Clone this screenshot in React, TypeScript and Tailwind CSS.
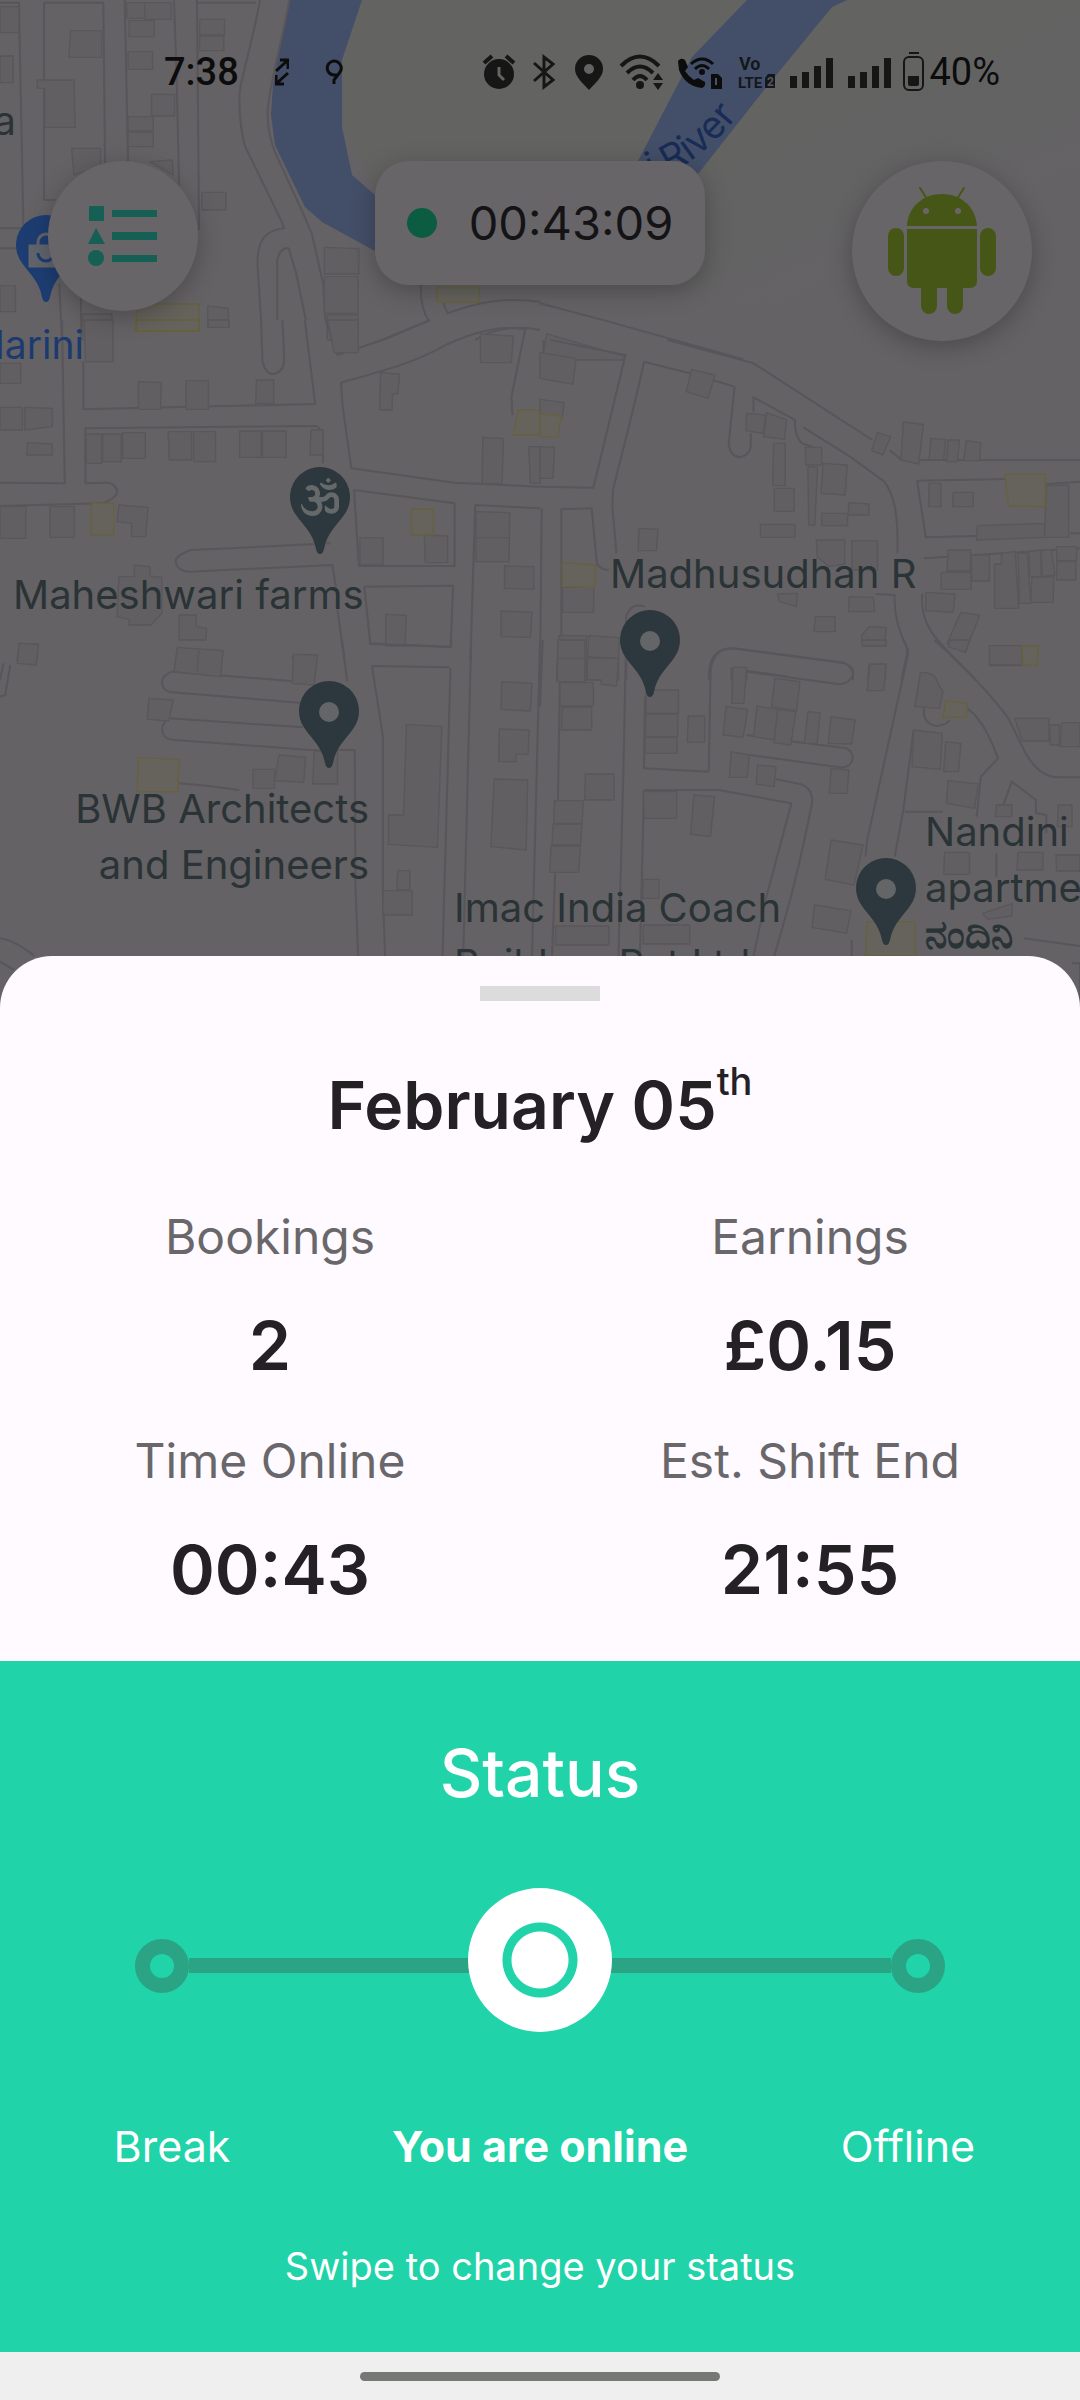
import { useState } from "react";
// icons
import { FaOm } from "react-icons/fa";

interface ITile {
  transform: string;
  roads: string;
  blocks: string;
  shops?: string;
}

// street map, cut in tiles of 540 units wide
const tiles: ITile[] = [
  {
    transform: "scale(.3444 .3333)",
    roads:
      "M0 8H55L68 685H0M0 745H72L60 700M128 600V8H300L305 490M128 600H160M362 0 372 490M505 0 512 200 520 555M572 0 578 690M568 8H742M755 0C740 90 715 180 698 260 690 310 700 400 712 440L818 665 825 685C770 690 745 720 748 800L758 960M840 0C820 120 790 220 778 320 774 370 780 410 800 460L880 640 905 700 938 850 945 960M805 960V780Q815 740 838 745L860 820 888 960M172 850 180 1020M235 890V1020M1222 850C1220 900 1230 940 1245 962L1110 1020M1285 905 1300 940C1380 910 1460 890 1568 905M1380 1020C1430 985 1500 975 1568 990",
    blocks:
      "M0 20H55V98H0zM0 168H38V248H0zM205 92H295V172H200zM108 240H215L218 382H130V265H108zM368 8H420V55H368zM420 8H497V58H420zM375 62H448V110H375zM372 155H443V208H372zM440 283H507V348H440zM372 350H445V392H372zM372 396H445V440H372zM580 58H652V105H580zM580 108H650V152H580zM208 445H292V500L215 525zM435 485 500 480 503 525zM586 577H656V630H586zM942 742 1042 746V822H942zM942 830H1040V940H942zM950 945H1040V1020H950zM0 857H45V935H0zM603 918 662 925 665 982H603zM240 942H325V1020H240z",
    shops: "M400 912H578V994H392zM1268 862H1392V907H1268z",
  },
  {
    transform: "translate(540) scale(.3444 .3333)",
    roads: "M0 910 200 965 590 1078",
    blocks: "M20 1002 248 1070 240 1080H5z",
  },
  {
    transform: "translate(0 320) scale(.3444 .3333)",
    roads:
      "M180 0 188 490 0 488M0 558 300 550Q345 530 340 510 330 485 300 488L248 490V325L920 318 938 340V430M242 125V268L915 252 885 0M758 0 762 120Q770 165 795 162 828 155 825 110L820 0M945 0 960 45 980 105 1110 60 1250 0M990 188C1120 150 1200 130 1300 72 1380 35 1450 15 1525 28L1485 230 1488 285M990 188 995 260 1020 445 1320 488 1568 500M1028 510 1320 550V738H1042zM1568 565 1380 555 1366 1020M960 670 555 690Q510 705 510 725 515 755 550 755L965 735 975 800M980 870 1000 1020M1058 800 1316 797 1308 982 1075 970z",
    blocks:
      "M245 0H328V125H248zM952 0H1040V98H970zM0 130H60V190H0zM402 185 468 188 466 268H402zM540 182H605V268H540zM745 180H795V250H742zM0 262H65V330H0zM72 262 152 265V320L72 330zM80 368 152 372V405H78zM250 342H295V430H250zM298 342H352V425H298zM356 338H422V415H356zM488 335H556V420H492zM562 335H626V425H562zM696 333H758V412H696zM762 333H831V412H762zM903 330H938V405H900zM145 560H216V652H145zM0 560H75V655H0zM345 555 430 562 423 650H382V610L340 605zM345 770H390V735L435 740V768L470 772V880L438 915H375V898L340 890zM520 885H570V920L600 925 598 960H520zM58 970 110 972 108 1020H50zM515 985 645 992V1020H512zM1045 653H1112V733H1045zM1232 645 1300 648V728H1235zM1395 42 1490 48 1485 128H1395zM1105 158 1160 162 1155 222H1140L1138 270H1102zM1402 352 1462 355 1458 490H1400zM1535 380H1568V490H1540zM1382 575 1480 578 1478 725H1382zM1382 653H1478M1465 738 1550 740V808L1465 805zM1455 873 1545 877 1540 952 1455 950zM1120 883 1180 886 1176 978H1120zM605 0H665V22H605zM850 1008H920V1020H850z",
    shops: "M397 0H578V32H397zM265 550H330V645H265zM1195 567H1258V645H1195zM1505 270H1568V345H1490z",
  },
  {
    transform: "translate(540 340) scale(.3444 .3333)",
    roads:
      "M30 0 248 45 155 443 0 440M10 0V35M370 0 620 70 965 300M1015 330 1050 360M1100 360 1568 360M435 100 302 65C275 200 240 330 212 450L210 500 222 640M500 120 565 140 548 310Q552 350 580 352 610 345 612 320V280M620 215V172L740 240Q740 290 760 310L790 320M765 262 900 350 1000 425C1030 470 1040 520 1038 640M5 505 0 1020M62 885V508L150 505 165 670Q175 690 200 690M1350 417 1095 422 1120 592 1270 588M1540 580H1568M1115 655 1568 625M1470 432 1568 425M975 762 1030 765Q1025 840 1068 930L1050 1020M1110 760C1100 880 1180 920 1265 1020M250 1020V830Q265 785 305 800M490 1020C490 950 510 925 560 925L880 968Q915 980 908 1020M600 992 720 1010",
    blocks:
      "M0 38 105 55 95 133 0 115zM0 178 70 188 65 230H0zM0 320 42 322 38 415H0zM440 88 508 105 488 175 425 155zM600 220 655 225 648 280 598 272zM658 218 716 240 710 298 650 290zM678 310H712V437H676zM680 445H738V514H680zM770 322H818V375H772zM778 380 806 382 798 555H780zM822 370 892 375 886 465 816 460zM818 520H893V557H818zM897 488 955 492V525H895zM640 553H740V592H640zM288 565 343 568 338 632H285zM802 600H885V672L840 680 805 650zM905 602H980V690H905zM980 278 1018 290 995 345 963 332zM1055 246 1113 253 1100 372 1048 360zM1135 295 1178 298 1172 360 1130 358zM1185 300H1218L1212 365H1180zM1238 302 1280 308 1276 362H1230zM1130 430H1164V500H1128zM1200 457H1258V500H1198zM1470 437 1535 435V592H1465zM1270 557 1465 550V592L1268 600zM1185 630H1250V693H1182zM1165 697H1252V748H1165zM1252 645H1305V723H1254zM1340 640 1380 635 1390 805H1320V672H1340zM1388 640H1415L1425 790H1392zM1420 635 1455 630V710H1422zM1455 632 1485 628 1495 705 1458 710zM1500 620H1558V662H1500zM1500 665H1556V720H1500zM1428 712 1492 710 1490 787H1425zM1120 757 1205 762 1200 817 1120 812zM1222 817 1277 825 1235 937 1182 910zM898 770 968 772 972 815H896zM800 830H857V875H795zM690 762 748 760 744 800 695 785zM955 860 1005 862 1000 917 935 912V885zM1308 917H1400V977H1305zM55 887H135V955H50zM142 887 230 893 228 955H138zM50 960H135V1020H48zM138 960H228V1020H138zM65 742H157L155 817H65zM555 985 600 990V1020H555zM955 975H1003V1020H952z",
    shops: "M0 222 62 228 52 290H0zM65 668 162 675 158 743 65 740zM1350 403H1467V500L1360 498zM1400 917 1447 919 1443 975 1402 973z",
  },
  {
    transform: "translate(0 640) scale(.3444 .3333)",
    roads:
      "M845 123 500 95Q470 105 470 130 475 155 500 157L870 188M880 262 495 235M480 245Q465 262 475 285 485 300 510 300L900 330H1030L1032 740 1040 948M1305 82 1080 78 1112 290V760L1118 948M1308 85 1285 948M993 0 1008 125M1368 0 1345 948M1072 12 1310 20V0M1568 0 1545 948M520 430 600 437 695 450M0 895Q40 900 100 948M0 965 40 990M10 70 0 120M30 75 15 165 0 170",
    blocks:
      "M55 10 112 13 105 75 50 70zM515 22 648 32 640 110 505 95zM578 25 572 95M852 43 922 45 912 135 848 130zM432 175 503 180 490 243 428 238zM735 388H797V445H735zM810 345 887 352 882 427 797 422zM912 335H980V432H908zM1180 253 1283 260 1270 622 1128 613V525H1172zM1155 692H1190V750H1152zM1112 752H1197V825H1112zM1457 125 1545 130 1540 213 1455 208zM1450 267 1537 270 1533 343H1498V365H1448zM1435 417 1532 420 1528 630 1425 620z",
    shops: "M402 353 520 358 516 455H398z",
  },
  {
    transform: "translate(540 640) scale(.3444 .3333)",
    roads:
      "M60 0 52 480 35 948M8 0 0 200M250 0 242 400 228 948M490 395 302 385 305 170M490 395 495 110Q495 25 560 25L880 68Q915 80 908 105 900 130 870 133L600 95M600 285 740 305 890 325Q915 340 905 365 895 385 870 382L610 345M302 450H520L730 490 655 780 620 948M685 418 745 430Q795 440 790 490C760 640 740 740 680 948M302 450 290 948M1055 0Q1068 20 1068 45L950 600 945 650M1085 270 1055 510 1030 650M905 900V948M1145 0C1220 70 1300 150 1360 235L1410 340Q1450 410 1500 412H1568M1240 205Q1290 240 1330 355L1280 410 1268 530M1060 515H1170M1345 495 1370 425 1440 480V520L1470 525V580M1115 205Q1110 250 1150 258 1180 255 1190 240M1405 895 1568 918M1545 970H1568V1080M1325 640V710",
    blocks:
      "M52 0H130V125H50zM138 50 228 55 222 138 178 133V120H138zM50 55H228M58 128H155V198H58zM65 202H150V270H62zM132 402H215V480H130zM42 482H126L122 550H40zM38 552H122L118 615H35zM32 618H118L112 697H28zM308 150H402V220H308zM308 222H400V290H305zM305 292H398V340H305zM430 228H478V307H428zM560 82H600L592 190H557zM540 200 603 208 590 292 532 285zM630 198 690 208 680 300 620 290zM682 115 755 125 745 213 672 200zM690 208 743 215 728 315 680 308zM778 215 813 218 805 310H768zM845 230 915 240 905 312 837 310zM555 335 608 345 602 412H550zM632 375 685 380 680 440 628 432zM845 385 897 390 892 460H840zM300 455H397V535H302zM447 465 507 470 495 590 437 582zM845 600 938 615 912 735 828 718zM797 795 903 812 890 880 790 862zM300 718H345V775H298zM300 855H435V912H300zM45 858H200V915H45zM958 72H1005L998 152H950zM1305 17H1400V75H1305zM1105 97Q1150 95 1155 130L1170 155 1160 205 1088 200zM1085 270 1168 280 1162 388 1080 380zM1178 305 1222 310 1215 395H1172zM1185 422 1272 432 1262 505 1180 490zM1378 235H1478V303H1400zM1480 255H1508V315H1482zM1515 248H1568V320H1510zM1325 495H1370V530H1322zM1175 637H1247V703H1172zM1388 637H1460V690H1385zM1498 645H1568V693H1500zM1505 495H1545V560H1502zM1285 820 1372 790 1370 828 1300 838zM935 0H1005V18H935zM1190 0H1248L1235 37 1185 20z",
    shops: "M1400 17 1447 19 1443 77 1402 75zM1178 182 1240 190 1238 230 1170 233zM950 845H1090V948H945z",
  },
];

const pins: { x: number; y: number; kind: "dot" | "om" | "bag" }[] = [
  { x: 46, y: 246, kind: "bag" },
  { x: 320, y: 498, kind: "om" },
  { x: 329, y: 712, kind: "dot" },
  { x: 650, y: 641, kind: "dot" },
  { x: 886, y: 889, kind: "dot" },
];

const labels = [
  { x: 13, y: 609, text: "Maheshwari farms" },
  { x: 610, y: 588, text: "Madhusudhan R" },
  { x: 369, y: 823, text: "BWB Architects", end: true },
  { x: 369, y: 879, text: "and Engineers", end: true },
  { x: 454, y: 922, text: "Imac India Coach" },
  { x: 454, y: 978, text: "Builders Pvt Ltd" },
  { x: 925, y: 846, text: "Nandini" },
  { x: 925, y: 902, text: "apartments" },
  { x: 925, y: 948, text: "ನಂದಿನಿ", bold: true },
  { x: 16, y: 135, text: "a", end: true },
];

const stats = [
  { label: "Bookings", value: "2" },
  { label: "Earnings", value: "£0.15" },
  { label: "Time Online", value: "00:43" },
  { label: "Est. Shift End", value: "21:55" },
];

const Map = () => (
  <svg
    viewBox="0 0 1080 1020"
    preserveAspectRatio="xMidYMin slice"
    className="block w-full h-[1020px] bg-[#646265] font-['Inter','Noto_Sans',sans-serif]"
    aria-label="Map"
  >
    <defs>
      <linearGradient id="park" x1="0" y1="0" x2="1" y2="1">
        <stop offset="0" stopColor="#636461" />
        <stop offset=".4" stopColor="#636361" />
        <stop offset=".8" stopColor="#646265" />
      </linearGradient>
      <path id="riverName" d="M650 180C694 168 732 132 772 66" />
    </defs>
    <path d="M362 0H1080V330L700 300 375 190 342 125V60z" fill="url(#park)" />
    <path d="M289 0H362L342 60V127L352 175 375 195V251L322 222 305 207 275 145 271 115 273 85z" fill="#434f68" />
    <path d="M747 0H847L832 7 764 90 698 174 680 161H638L692 57z" fill="#434f68" />
    {tiles.map(({ transform, roads, blocks, shops }, key) => (
      <g key={key} transform={transform} strokeLinejoin="round">
        <path d={roads} fill="none" stroke="#58565a" strokeWidth="6" />
        <path d={blocks} fill="#615f62" stroke="#59575a" strokeWidth="4" />
        <path d={shops} fill="#65635c" stroke="#66613f" strokeWidth="4" />
      </g>
    ))}
    {pins.map(({ x, y, kind }, key) => (
      <g key={key} transform={`translate(${x} ${y})`}>
        <path
          d="M0 56Q-3 56-4 51C-7 35-17 27-24 17A30 30 0 1 1 24 17C17 27 7 35 4 51Q3 56 0 56z"
          fill={kind === "bag" ? "#1d3d72" : "#2c383d"}
        />
        {kind === "dot" && <circle r="10" fill="#646567" />}
        {kind === "om" && <FaOm x={-19} y={-20} size={38} color="#66696a" />}
        {kind === "bag" && (
          <g fill="none" stroke="#62656d" strokeWidth="3">
            <path d="M-16 0H16V20H-16z" fill="#62656d" />
            <path d="M-8 0V-4A8 8 0 0 1 8-4V0" />
            <path d="M-8 7A8 8 0 0 0 8 7" stroke="#1d3d72" />
          </g>
        )}
      </g>
    ))}
    {labels.map(({ x, y, text, end, bold }, key) => (
      <text
        key={key}
        x={x}
        y={y}
        textAnchor={end ? "end" : "start"}
        fontSize="40"
        fontWeight={bold ? 600 : 400}
        fill="#2a3335"
      >
        {text}
      </text>
    ))}
    <text x="84" y="359" textAnchor="end" fontSize="39" fill="#1b3a70">
      Marini
    </text>
    <text fontSize="38" fill="#182c55">
      <textPath href="#riverName">i River</textPath>
    </text>
  </svg>
);

const Signal = () => (
  <svg className="w-[46px] h-[40px]" viewBox="0 0 46 40" fill="#161617" aria-hidden="true">
    <path d="M3 24h7v12H3zM15 20h7v16h-7zM27 14h7v22h-7zM39 6h7v30h-7z" />
  </svg>
);

const StatusBar = () => (
  <div className="flex items-center justify-between h-36 pl-[164px] pr-20 text-[38px] text-[#0c0c0d] font-['Roboto',sans-serif]">
    <div className="flex items-center gap-9">
      <span className="font-medium">7:38</span>
      <svg className="w-[14px] h-[28px]" viewBox="0 0 14 28" fill="none" stroke="#0c0c0d" strokeWidth="3" aria-hidden="true">
        <path d="M1 13 12 3M5 2H13V11M13 15 2 25M9 26H1V17" />
      </svg>
      <svg className="w-[18px] h-[28px]" viewBox="0 0 18 28" fill="none" stroke="#0c0c0d" strokeWidth="3" aria-hidden="true">
        <path d="M9 26V22L15 14A7 7 0 1 0 9 17H12" />
      </svg>
    </div>
    <div className="flex items-center gap-3">
      <svg className="w-[36px] h-[40px]" viewBox="0 0 36 40" fill="none" stroke="#161617" strokeWidth="4" aria-hidden="true">
        <circle cx="18" cy="22" r="15" fill="#161617" stroke="none" />
        <path d="M3 11 11 4M33 11 25 4" />
        <path d="M18 15V23L23 28" stroke="#646460" strokeWidth="3" />
      </svg>
      <svg className="w-[30px] h-[40px]" viewBox="0 0 30 40" fill="none" stroke="#161617" strokeWidth="3" aria-hidden="true">
        <path d="M5 11 24 28 15 35V5L24 12 5 29" />
      </svg>
      <svg className="w-[36px] h-[40px]" viewBox="0 0 36 40" aria-hidden="true">
        <path fill="#161617" fillRule="evenodd" d="M18 3A14 14 0 0 0 4 17C4 25 12 31 18 38 24 31 32 25 32 17A14 14 0 0 0 18 3zM18 12A5 5 0 1 1 18 22 5 5 0 0 1 18 12z" />
      </svg>
      <svg className="w-[46px] h-[40px]" viewBox="0 0 46 40" fill="none" stroke="#161617" strokeWidth="4" aria-hidden="true">
        <path d="M2 14Q21-5 40 14M8 21Q21 8 34 21M14 28Q21 20 28 28" />
        <circle cx="21" cy="33" r="4" fill="#161617" stroke="none" />
        <path d="M34 28 39 21 44 28zM34 31H44L39 38z" fill="#161617" stroke="none" />
      </svg>
      <svg className="w-[46px] h-[40px]" viewBox="0 0 46 40" fill="none" stroke="#0c0c0d" aria-hidden="true">
        <path d="M1 9Q4 5 8 8L11 15 8 19Q12 25 17 28L21 26 28 30Q29 34 25 36 8 34 2 18z" fill="#0c0c0d" stroke="none" />
        <path d="M14 12Q25 2 36 12M18 17Q25 10 32 17" strokeWidth="3" />
        <circle cx="25" cy="20" r="3" fill="#0c0c0d" stroke="none" />
        <path d="M34 22h7l4 4v11H34z" fill="#0c0c0d" stroke="none" />
        <path d="M39 26v7" stroke="#46516a" strokeWidth="2" />
      </svg>
      <svg className="w-[40px] h-[40px] font-bold" viewBox="0 0 40 40" fill="#14171c" aria-hidden="true">
        <text x="4" y="18" fontSize="18">Vo</text>
        <text x="3" y="36" fontSize="15">LTE</text>
        <path d="M30 26 33 22H40V36H30z" />
        <text x="32" y="34" fontSize="12" fill="#55585c">2</text>
      </svg>
      <Signal />
      <Signal />
      <div className="flex items-center gap-1">
        <svg className="w-[22px] h-[40px]" viewBox="0 0 22 40" fill="none" stroke="#161617" strokeWidth="2" aria-hidden="true">
          <path d="M6 1H16" />
          <rect x="1" y="5" width="19" height="33" rx="5" />
          <path d="M5 24H16V32Q16 34 14 34H7Q5 34 5 32z" fill="#161617" stroke="none" />
        </svg>
        <span>40%</span>
      </div>
    </div>
  </div>
);

const Header = () => (
  <header className="absolute inset-x-0 top-0">
    <StatusBar />
    <div className="grid grid-cols-[1fr_auto_1fr] items-start px-12 pt-[17px]">
      <button
        aria-label="Menu"
        className="flex items-center justify-center size-[150px] rounded-full bg-[#686568] shadow-[0_6px_24px_rgba(0,0,0,0.25)]"
      >
        <svg className="w-[70px] h-[60px]" viewBox="0 0 70 60" fill="#155f55" aria-hidden="true">
          <path d="M1 0h15v15H1zM8 22 17 38H0zM24 4h45v7H24zM24 26h45v8H24zM24 49h45v7H24z" />
          <circle cx="8" cy="52" r="8" />
        </svg>
      </button>
      <div className="flex items-center gap-8 h-[124px] px-8 rounded-[34px] bg-[#686568] shadow-[0_6px_24px_rgba(0,0,0,0.25)]">
        <span className="size-[30px] rounded-full bg-[#0b5c41]" />
        <time className="text-[47px] text-[#141316]">00:43:09</time>
      </div>
      <button
        aria-label="Profile"
        className="flex items-center justify-center justify-self-end size-[180px] rounded-full bg-[#686568] shadow-[0_6px_24px_rgba(0,0,0,0.25)]"
      >
        <svg className="w-[108px] h-[128px]" viewBox="0 0 108 128" fill="#465617" aria-hidden="true">
          <path d="M19 39C20 20 35 7 54 7S88 20 89 39zM19 42H89V94Q89 101 82 101H26Q19 101 19 94z" />
          <rect x="0" y="41" width="16" height="48" rx="8" />
          <rect x="92" y="41" width="16" height="48" rx="8" />
          <path d="M33 98H49V119A8 8 0 0 1 33 119zM59 98H75V119A8 8 0 0 1 59 119z" />
          <path d="M32 1 39 12M76 1 69 12" stroke="#465617" strokeWidth="2" strokeLinecap="round" />
          <circle cx="38" cy="24" r="3" fill="#686568" />
          <circle cx="70" cy="24" r="3" fill="#686568" />
        </svg>
      </button>
    </div>
  </header>
);

const StatusSlider = () => {
  const [status, setStatus] = useState(1);

  return (
    <section className="bg-[#20d3a8] text-white text-center pt-[72px] pb-[62px]">
      <h2 className="text-[66px] leading-[80px] font-medium">Status</h2>
      <div className="relative flex items-center h-36 mt-[75px] px-[135px] pt-[11px]">
        <span className="size-[54px] rounded-full border-[15px] border-[#2aa485]" />
        <span className="grow h-[15px] bg-[#2aa485]" />
        <span className="size-[54px] rounded-full border-[15px] border-[#2aa485]" />
        <input
          type="range"
          min={0}
          max={2}
          value={status}
          onChange={(e) => setStatus(Number(e.target.value))}
          aria-label="Swipe to change your status"
          className="absolute inset-y-0 left-[90px] w-[calc(100%-180px)] appearance-none bg-transparent [&::-webkit-slider-thumb]:appearance-none [&::-webkit-slider-thumb]:size-36 [&::-webkit-slider-thumb]:rounded-full [&::-webkit-slider-thumb]:bg-[radial-gradient(circle,#fff_28px,#20d3a8_29px,#20d3a8_37px,#fff_38px)]"
        />
      </div>
      <div className="flex justify-between mt-[86px] px-[104px] text-[43px] leading-[56px]">
        <span className="w-[136px]">Break</span>
        <span className="font-bold">You are online</span>
        <span className="w-[136px]">Offline</span>
      </div>
      <p className="mt-[68px] text-[38px] leading-[48px]">Swipe to change your status</p>
    </section>
  );
};

const App = () => {
  return (
    <main className="relative min-h-screen bg-[#efefef] font-['Inter',sans-serif]">
      <Map />
      <Header />
      <div className="relative -mt-16 rounded-t-[52px] overflow-hidden bg-[#fefaff]">
        <section className="flex flex-col items-center pt-[30px] pb-8 text-[#232124]">
          <span className="w-[120px] h-[15px] bg-[#dddcdd]" />
          <h1 className="flex items-start mt-14 text-[66px] leading-[96px] font-semibold">
            February 05
            <sup className="static text-[38px] leading-[48px] font-medium">th</sup>
          </h1>
          <dl className="grid grid-cols-2 gap-y-2 w-full mt-9 text-center">
            {stats.map(({ label, value }, key) => (
              <div key={key}>
                <dt className="text-[48px] leading-[96px] text-[#69676a]">{label}</dt>
                <dd className="text-[68px] leading-[120px] font-semibold">{value}</dd>
              </div>
            ))}
          </dl>
        </section>
        <StatusSlider />
      </div>
      <div className="flex items-center justify-center h-12">
        <span className="w-[360px] h-[9px] rounded-full bg-[#767876]" />
      </div>
    </main>
  );
};

export default App;
